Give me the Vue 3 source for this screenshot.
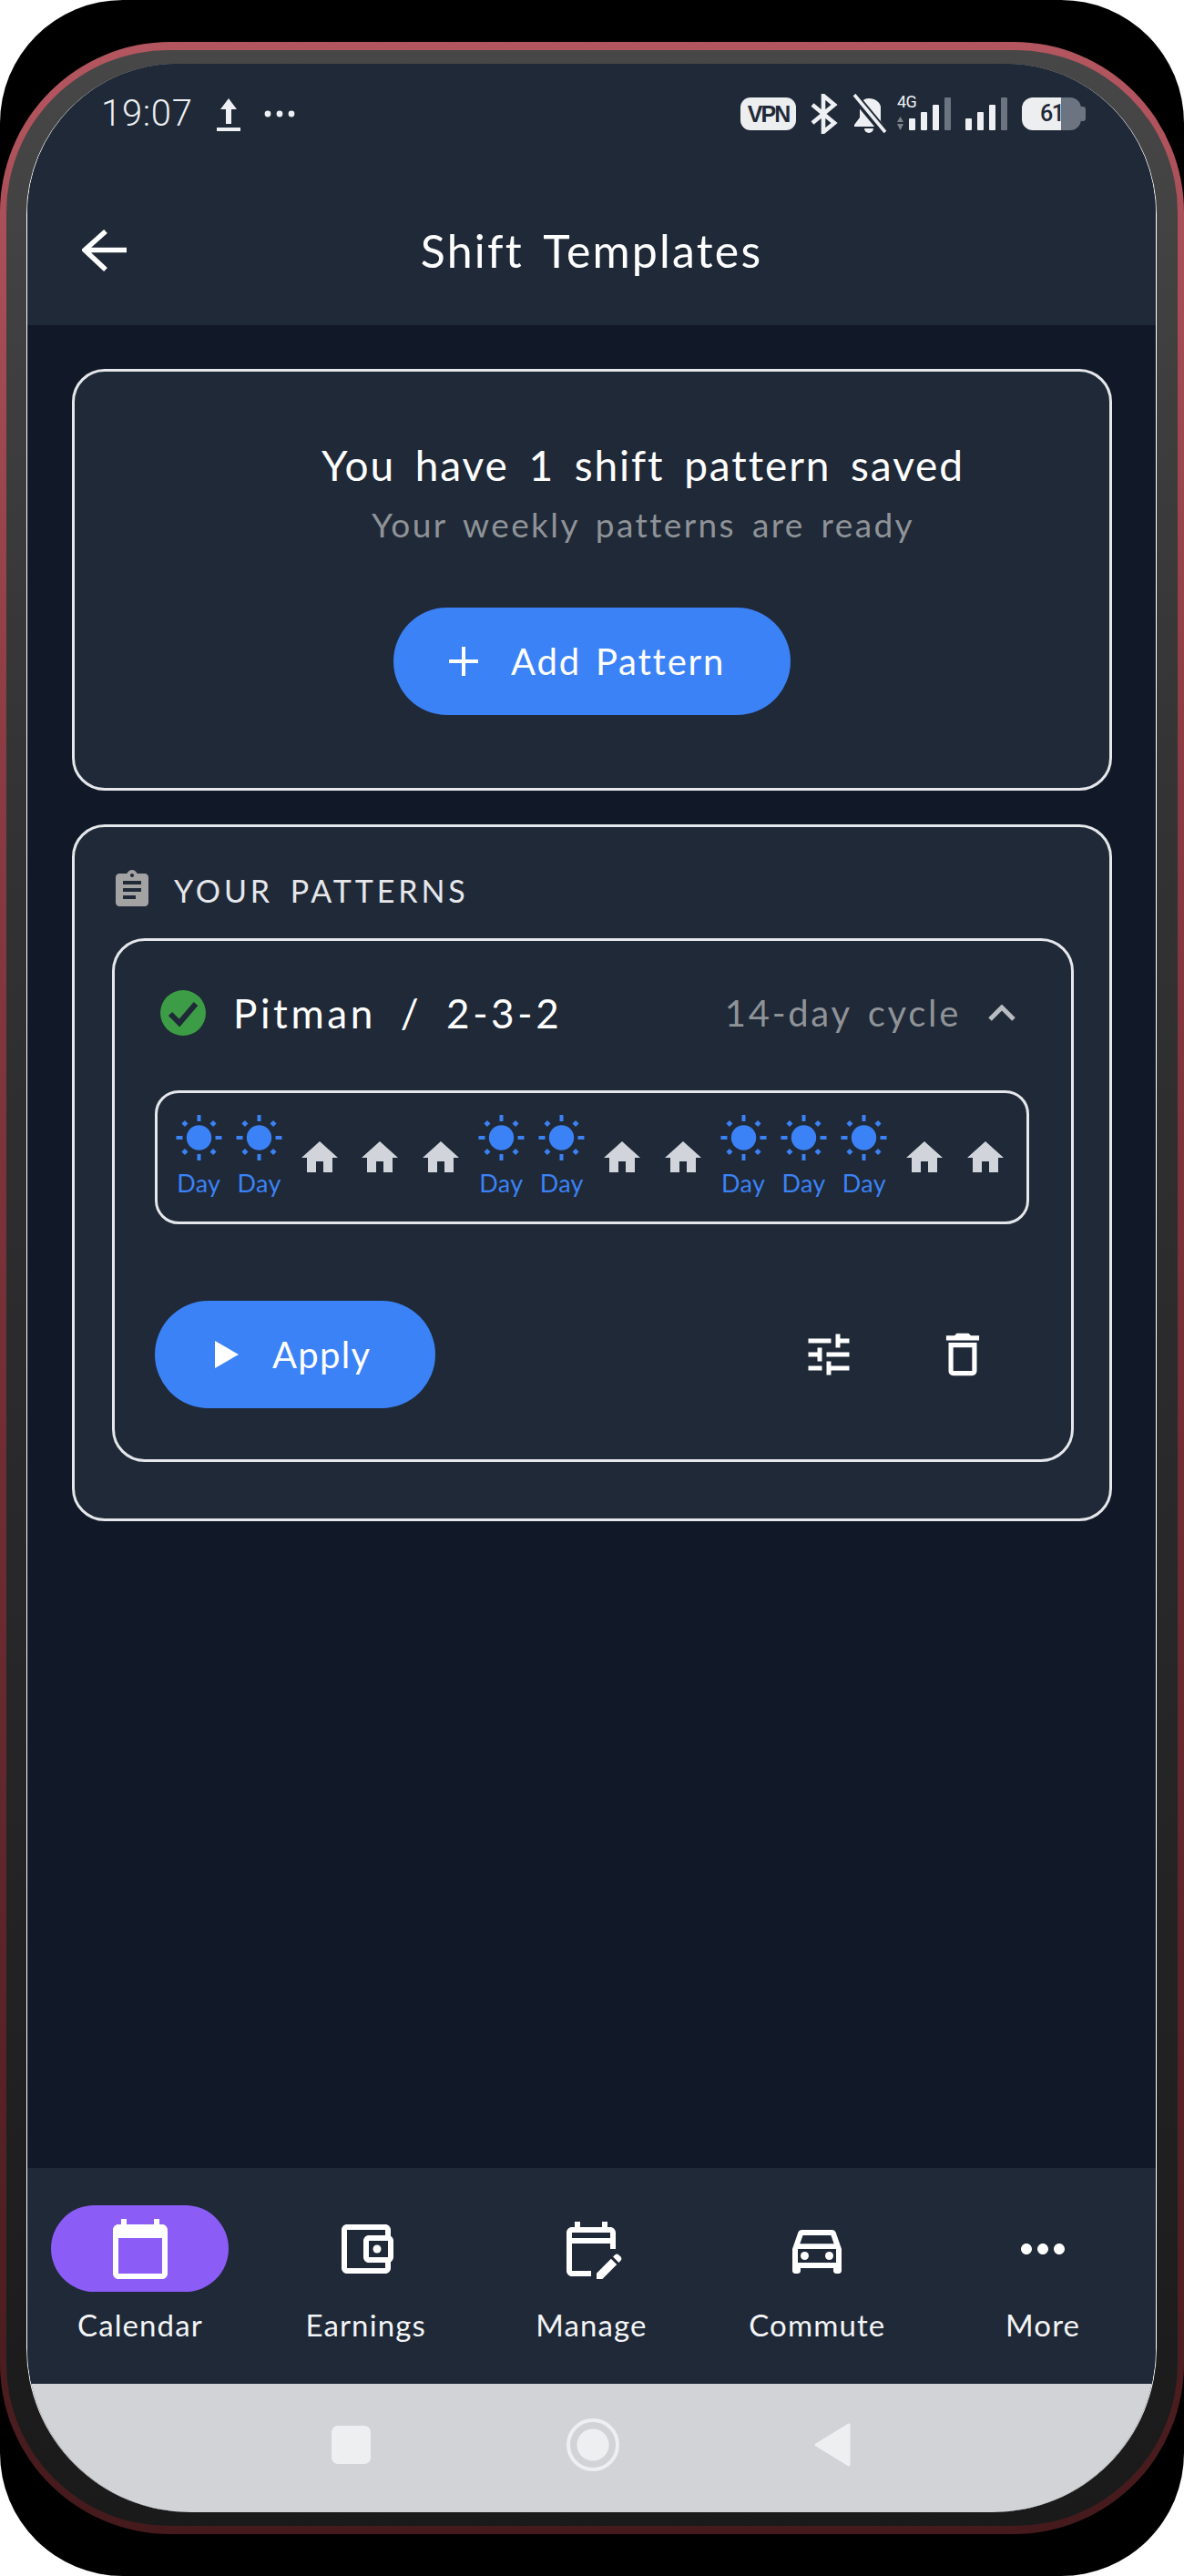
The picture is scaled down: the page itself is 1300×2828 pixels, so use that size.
<script setup>
const pattern = ['d','d','h','h','h','d','d','h','h','d','d','d','h','h']
const rays = [0,45,90,135,180,225,270,315]
const tabs = [
  { label: 'Calendar', active: true, paths: ['M20 3h-1V1h-2v2H7V1H5v2H4c-1.1 0-2 .9-2 2v16c0 1.1.9 2 2 2h16c1.1 0 2-.9 2-2V5c0-1.1-.9-2-2-2zm0 18H4V8h16v13z'] },
  { label: 'Earnings', paths: ['M21 7.28V5c0-1.1-.9-2-2-2H5c-1.11 0-2 .9-2 2v14c0 1.1.89 2 2 2h14c1.1 0 2-.9 2-2v-2.28c.59-.35 1-.98 1-1.72V9c0-.74-.41-1.38-1-1.72zM20 9v6h-7V9h7zM5 19V5h14v2h-6c-1.1 0-2 .9-2 2v6c0 1.1.9 2 2 2h6v2H5z','M16 10.5a1.5 1.5 0 1 0 0 3a1.5 1.5 0 1 0 0-3z'] },
  { label: 'Manage', paths: ['M5 10h14v2h2V6c0-1.1-.9-2-2-2h-1V2h-2v2H8V2H6v2H5c-1.11 0-1.99.9-1.99 2L3 20c0 1.1.89 2 2 2h7v-2H5V10zm0-4h14v2H5V6zm17.84 10.28l-.71.71-2.12-2.12.71-.71c.39-.39 1.02-.39 1.41 0l.71.71c.39.39.39 1.02 0 1.41zm-3.54-.7l2.12 2.12-5.3 5.3H14v-2.12l5.3-5.3z'] },
  { label: 'Commute', paths: ['M18.92 6.01C18.72 5.42 18.16 5 17.5 5h-11c-.66 0-1.21.42-1.42 1.01L3 12v8c0 .55.45 1 1 1h1c.55 0 1-.45 1-1v-1h12v1c0 .55.45 1 1 1h1c.55 0 1-.45 1-1v-8l-2.08-5.99zM6.85 7h10.29l1.08 3.11H5.77L6.85 7zM19 17H5v-5h14v5z','M7.5 13a1.5 1.5 0 1 0 0 3a1.5 1.5 0 1 0 0-3z','M16.5 13a1.5 1.5 0 1 0 0 3a1.5 1.5 0 1 0 0-3z'] },
  { label: 'More', paths: ['M6 10c-1.1 0-2 .9-2 2s.9 2 2 2 2-.9 2-2-.9-2-2-2zm12 0c-1.1 0-2 .9-2 2s.9 2 2 2 2-.9 2-2-.9-2-2-2zm-6 0c-1.1 0-2 .9-2 2s.9 2 2 2 2-.9 2-2-.9-2-2-2z'] },
]
</script>

<template>
  <div class="device">
    <div class="frame">
      <div class="bezel">
        <div class="screen">
          <header class="top">
            <div class="status">
              <div class="status-left">
                <span class="time">19:07</span>
                <svg class="up" width="26" height="36" viewBox="0 0 26 36"><path d="M13 0L22 12H16V28H10V12H4Z" fill="#eef0f3"/><rect x="0" y="32" width="26" height="4" fill="#eef0f3"/></svg>
                <svg class="dots" width="34" height="8" viewBox="0 0 34 8"><circle cx="4" cy="4" r="3.4" fill="#eef0f3"/><circle cx="17" cy="4" r="3.4" fill="#eef0f3"/><circle cx="30" cy="4" r="3.4" fill="#eef0f3"/></svg>
              </div>
              <div class="status-right">
                <span class="vpn">VPN</span>
                <svg class="bt" width="30" height="44" viewBox="0 0 30 44" fill="none" stroke="#eef0f3" stroke-width="4.6"><path d="M2 12L26 32L14 42V2L26 12L2 32"/></svg>
                <svg class="bell" width="39" height="44" viewBox="0 0 39 44"><path d="M19 5c-7 0-10 5-10 11v10l-6 8v2h32v-2l-3-4V14C31 9 26 5 19 5z" fill="#eef0f3"/><path d="M14 38h10a5 5 0 0 1-10 0z" fill="#eef0f3"/><path d="M2 1L36 42" stroke="#1f2937" stroke-width="9"/><path d="M3 1L37 42" stroke="#eef0f3" stroke-width="3.6"/></svg>
                <svg class="sig4g" width="62" height="44" viewBox="0 0 62 44">
                  <text x="0" y="15" class="g4">4G</text>
                  <path d="M3.500 25L7 31H0Z" fill="#7b828c"/><path d="M3.500 40L7 33H0Z" fill="#7b828c"/>
                  <rect x="13" y="27" width="7" height="13" rx="1" fill="#eef0f3"/><rect x="26" y="20" width="7" height="20" rx="1" fill="#eef0f3"/><rect x="39" y="12" width="7" height="28" rx="1" fill="#eef0f3"/><rect x="52" y="4" width="7" height="36" rx="1" fill="#6b7480"/>
                </svg>
                <svg class="sig" width="47" height="44" viewBox="0 0 47 44">
                  <rect x="0" y="27" width="7" height="13" rx="1" fill="#eef0f3"/><rect x="13" y="20" width="7" height="20" rx="1" fill="#eef0f3"/><rect x="26" y="12" width="7" height="28" rx="1" fill="#eef0f3"/><rect x="39" y="4" width="7" height="36" rx="1" fill="#6b7480"/>
                </svg>
                <div class="battery">
                  <div class="bat-fill"><span>61</span></div>
                  <i class="bat-tip"></i>
                </div>
              </div>
            </div>
            <div class="bar">
              <svg class="back" width="50" height="46" viewBox="0 0 50 46" fill="none" stroke="#fff" stroke-width="5.500"><path d="M49 22.500H3M26 2L3 22.500L26 44"/></svg>
              <h1 class="title">Shift Templates</h1>
              <span></span>
            </div>
          </header>

          <main class="content">
            <section class="card summary">
              <div class="sum-row">
                <i class="sum-spacer"></i>
                <div class="sum-text">
                  <p class="sum-title">You have 1 shift pattern saved</p>
                  <p class="sum-sub">Your weekly patterns are ready</p>
                </div>
              </div>
              <button class="pill add">
                <svg width="34" height="34" viewBox="0 0 34 34"><path d="M17 1V33M1 17H33" stroke="#fff" stroke-width="4" fill="none"/></svg>
                <span>Add Pattern</span>
              </button>
            </section>

            <section class="card patterns">
              <div class="pat-head">
                <svg width="48" height="48" viewBox="0 0 24 24"><path fill="#a3a3a3" d="M19 3h-4.180C14.400 1.840 13.300 1 12 1c-1.300 0-2.400.84-2.820 2H5c-1.100 0-2 .9-2 2v14c0 1.100.9 2 2 2h14c1.100 0 2-.9 2-2V5c0-1.100-.9-2-2-2zm-7 0c.55 0 1 .45 1 1s-.45 1-1 1-1-.45-1-1 .45-1 1-1zm2 14H7v-2h7v2zm3-4H7v-2h10v2zm0-4H7V7h10v2z"/></svg>
                <span>YOUR PATTERNS</span>
              </div>
              <div class="inner">
                <div class="inner-head">
                  <svg class="check" width="50" height="50" viewBox="0 0 50 50"><circle cx="25" cy="25" r="25" fill="#3d9c46"/><path d="M11 26L21 36L39 15" fill="none" stroke="#1f2937" stroke-width="6"/></svg>
                  <span class="pat-name">Pitman / 2-3-2</span>
                  <span class="cycle">14-day cycle</span>
                  <svg class="chev" width="30" height="18" viewBox="0 0 30 18" fill="none" stroke="#b9bcc0" stroke-width="5"><path d="M2 16L15 3L28 16"/></svg>
                </div>
                <div class="week">
                  <div v-for="(p, i) in pattern" :key="i" class="day">
                    <template v-if="p === 'd'">
                      <svg width="51" height="50" viewBox="0 0 51 50">
                        <circle cx="25.500" cy="25" r="13.700" fill="#3b82f6"/>
                        <g v-for="r in rays" :key="r" :transform="`rotate(${r} 25.500 25)`">
                          <rect v-if="r % 90 === 0" x="23.500" y="0" width="4" height="7" fill="#3b82f6"/>
                          <rect v-else x="23" y="0.500" width="5" height="5" fill="#3b82f6"/>
                        </g>
                      </svg>
                      <span class="day-label">Day</span>
                    </template>
                    <svg v-else width="48" height="48" viewBox="0 0 24 24"><path fill="#d1d5db" d="M10 20v-6h4v6h5v-8h3L12 3 2 12h3v8z"/></svg>
                  </div>
                </div>
                <div class="actions">
                  <button class="pill apply">
                    <svg width="26" height="30" viewBox="0 0 26 30"><path d="M0 0L26 15L0 30Z" fill="#fff"/></svg>
                    <span>Apply</span>
                  </button>
                  <div class="tools">
                    <svg width="60" height="60" viewBox="0 0 24 24"><path fill="#fff" d="M3 17v2h6v-2H3zM3 5v2h10V5H3zm10 16v-2h8v-2h-8v-2h-2v6h2zM7 9v2H3v2h4v2h2V9H7zm14 4v-2H11v2h10zm-6-4h2V7h4V5h-4V3h-2v6z"/></svg>
                    <svg width="62" height="62" viewBox="0 0 24 24"><path fill="#fff" d="M6 19c0 1.100.9 2 2 2h8c1.100 0 2-.9 2-2V7H6v12zM8 9h8v10H8V9zm7.500-5l-1-1h-5l-1 1H5v2h14V4h-3.500z"/></svg>
                  </div>
                </div>
              </div>
            </section>
          </main>

          <nav class="tabs">
            <div v-for="t in tabs" :key="t.label" class="tab">
              <div class="tab-icon" :class="{ active: t.active }">
                <svg width="72" height="72" viewBox="0 0 24 24"><path v-for="d in t.paths" :key="d" :d="d" fill="#fff"/></svg>
              </div>
              <span class="tab-label">{{ t.label }}</span>
            </div>
          </nav>

          <div class="sysnav">
            <i class="sys-square"></i>
            <i class="sys-circle"></i>
            <svg width="40" height="48" viewBox="0 0 40 48"><path d="M38 2V46L2 24Z" fill="#eeeff0" stroke="#eeeff0" stroke-width="3" stroke-linejoin="round"/></svg>
          </div>
        </div>
      </div>
    </div>
  </div>
</template>

<style>
html, body { margin: 0; background: #fff; }
</style>

<style scoped>
* { box-sizing: border-box; }
p, h1 { margin: 0; font-weight: inherit; }
.device {
  width: 1300px; height: 2828px; background: #000; border-radius: 135px;
  padding: 46px 0; display: flex;
  font-family: Lato, "Noto Sans", sans-serif; font-weight: 400; color: #fff;
}
.frame {
  flex: 1; border-radius: 187px; padding: 9px 7px;
  background: linear-gradient(180deg, #b4565f 0%, #8a3a42 30%, #451a1c 100%);
  display: flex;
}
.bezel {
  flex: 1; border-radius: 178px; padding: 15px 23px 15px 22px;
  background: linear-gradient(180deg, #474747 0%, #333 30%, #1a1a1a 100%);
  display: flex;
}
.screen {
  flex: 1; border-radius: 165px 165px 180px 180px; overflow: hidden;
  display: flex; flex-direction: column; background: #111827;
  border-left: 1px solid #fff; border-right: 1px solid #fff;
}
.top { height: 287px; background: #1f2937; flex: none; }
.status { display: flex; justify-content: space-between; align-items: center; height: 44px; margin-top: 33px; padding: 0 77px 0 81px; }
.status-left { display: flex; align-items: center; }
.time { font-size: 40px; letter-spacing: 0.7px; color: #eef0f3; font-family: Roboto, sans-serif; font-weight: 300; line-height: 44px; }
.up { margin-left: 26px; margin-top: 2px; }
.dots { margin-left: 26px; }
.status-right { display: flex; align-items: center; }
.vpn { width: 61px; height: 36px; border-radius: 11px; background: #eceef0; color: #1f2937; font: 700 25px/36px "Liberation Sans", sans-serif; text-align: center; letter-spacing: -2px; }
.bt { margin-left: 16px; }
.bell { margin-left: 15px; }
.sig4g { margin-left: 11px; overflow: visible; }
.sig { margin-left: 13px; }
.g4 { font: 400 18px "Roboto", sans-serif; fill: #eef0f3; letter-spacing: -0.5px; }
.battery { margin-left: 15px; width: 70px; height: 36px; display: flex; align-items: center; }
.bat-fill { width: 65px; height: 36px; border-radius: 12px; background: linear-gradient(90deg, #eceef0 0 66%, #6b7480 66% 100%); padding-left: 20px; font: 500 25px/36px Roboto, sans-serif; letter-spacing: -1.5px; color: #1f2937; }
.bat-tip { width: 5px; height: 16px; border-radius: 0 3px 3px 0; background: #6b7480; }
.bar { height: 164px; margin-top: 46px; display: grid; grid-template-columns: 1fr auto 1fr; align-items: center; padding: 0 60px; }
.back { display: block; }
.title { font-size: 50px; letter-spacing: 2.2px; word-spacing: 8px; line-height: 60px; }
.content { flex: 1; padding: 48px 48px 0 49px; display: flex; flex-direction: column; gap: 37px; }
.card { background: #1f2937; border: 3px solid #e5e7eb; border-radius: 36px; }
.summary { height: 463px; padding-top: 73px; display: flex; flex-direction: column; align-items: center; }
.sum-row { display: flex; }
.sum-spacer { width: 112px; }
.sum-text { text-align: center; }
.sum-title { font-size: 46px; letter-spacing: 1.9px; word-spacing: 8px; line-height: 60px; }
.sum-sub { font-size: 37px; letter-spacing: 2.4px; word-spacing: 6px; line-height: 44px; margin-top: 13px; color: #8f9398; }
.pill { border: 0; background: #3b82f6; color: #fff; display: flex; align-items: center; font: inherit; border-radius: 60px; height: 118px; padding: 0; }
.add { width: 436px; margin-top: 69px; padding-left: 60px; gap: 35px; font-size: 40px; letter-spacing: 1.8px; word-spacing: 4px; }
.patterns { height: 765px; padding: 46px 39px 0 41px; }
.pat-head { display: flex; align-items: center; height: 46px; color: #e5e7eb; font-size: 34px; letter-spacing: 3.9px; word-spacing: 6px; gap: 22px; margin-left: -2px; }
.inner { margin-top: 30px; height: 575px; border: 3px solid #e5e7eb; border-radius: 36px; padding: 54px 0 0 44px; }
.inner-head { display: flex; align-items: center; height: 50px; padding: 0 61px 0 6px; }
.pat-name { margin-left: 30px; font-size: 44px; letter-spacing: 3.6px; word-spacing: 12px; flex: 1; }
.cycle { font-size: 40px; letter-spacing: 2.7px; word-spacing: 5px; color: #8f9398; }
.chev { margin-left: 30px; }
.week { margin-top: 60px; width: 960px; height: 147px; border: 3px solid #e5e7eb; border-radius: 26px; padding: 0 12px; display: grid; grid-template-columns: repeat(14, 1fr); align-items: center; }
.day { display: flex; flex-direction: column; align-items: center; justify-content: center; }
.day svg { display: block; }
.day-label { font-size: 27px; color: #3b82f6; line-height: 38px; margin-top: 6px; letter-spacing: 0.3px; }
.actions { display: flex; justify-content: space-between; align-items: center; margin-top: 84px; padding-right: 88px; }
.apply { width: 308px; padding-left: 66px; gap: 37px; font-size: 40px; letter-spacing: 1.3px; }
.tools { display: flex; gap: 86px; align-items: center; }
.tabs { height: 237px; flex: none; background: #1f2937; display: grid; grid-template-columns: repeat(5, 1fr); padding-top: 41px; }
.tab { display: flex; flex-direction: column; align-items: center; }
.tab-icon { width: 195px; height: 95px; border-radius: 48px; display: flex; align-items: center; justify-content: center; }
.tab-icon.active { background: #8b5cf6; }
.tab-label { margin-top: 16px; font-size: 33px; letter-spacing: 1.1px; line-height: 40px; color: #f3f4f6; }
.sysnav { height: 141px; flex: none; background: #d1d3d7; display: flex; align-items: center; justify-content: space-between; padding: 0 335px 8px 334px; }
.sys-square { width: 43px; height: 42px; border-radius: 7px; background: #eeeff0; }
.sys-circle { width: 58px; height: 58px; border-radius: 50%; border: 4px solid #eeeff0; background: radial-gradient(circle, #eeeff0 0 17px, transparent 18px); }
</style>
